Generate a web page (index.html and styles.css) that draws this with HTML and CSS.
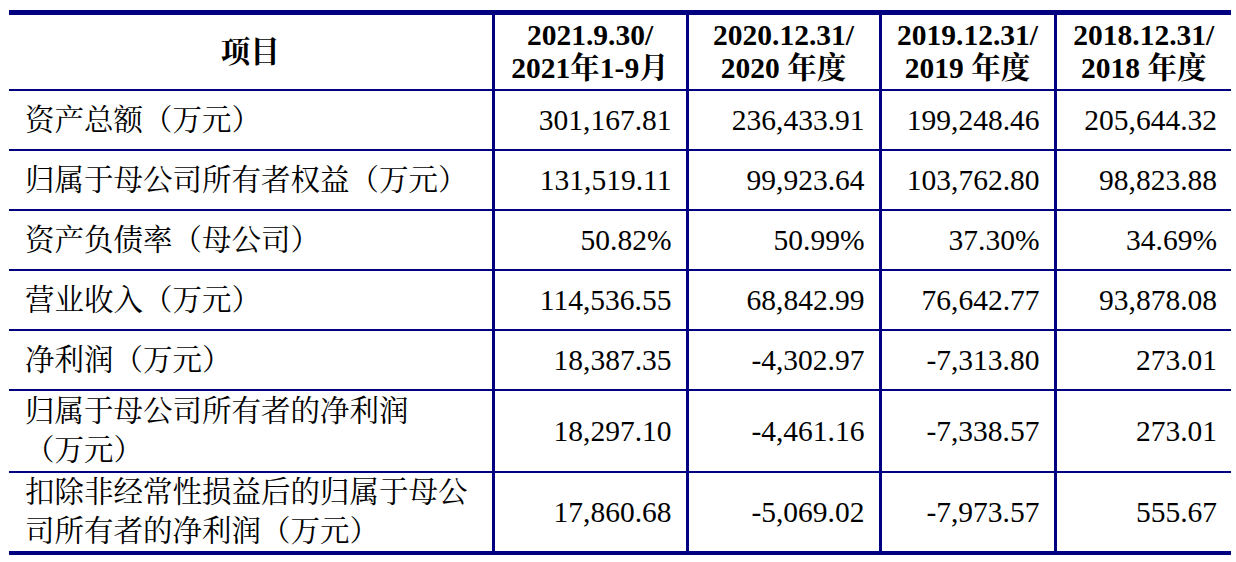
FILE: index.html
```html
<!DOCTYPE html>
<html lang="zh-CN">
<head>
<meta charset="utf-8">
<link rel="stylesheet" href="styles.css">
</head>
<body>
<table class="fin">
  <colgroup>
    <col class="c-item"><col class="c-a"><col class="c-b"><col class="c-c"><col class="c-d">
  </colgroup>
  <thead>
    <tr>
      <th>项目</th>
      <th>2021.9.30/<br>2021年1-9月</th>
      <th>2020.12.31/<br>2020 年度</th>
      <th>2019.12.31/<br>2019 年度</th>
      <th>2018.12.31/<br>2018 年度</th>
    </tr>
  </thead>
  <tbody>
    <tr class="single">
      <td class="label">资产总额（万元）</td>
      <td>301,167.81</td><td>236,433.91</td><td>199,248.46</td><td>205,644.32</td>
    </tr>
    <tr class="single">
      <td class="label">归属于母公司所有者权益（万元）</td>
      <td>131,519.11</td><td>99,923.64</td><td>103,762.80</td><td>98,823.88</td>
    </tr>
    <tr class="single">
      <td class="label">资产负债率（母公司）</td>
      <td>50.82%</td><td>50.99%</td><td>37.30%</td><td>34.69%</td>
    </tr>
    <tr class="single">
      <td class="label">营业收入（万元）</td>
      <td>114,536.55</td><td>68,842.99</td><td>76,642.77</td><td>93,878.08</td>
    </tr>
    <tr class="single">
      <td class="label">净利润（万元）</td>
      <td>18,387.35</td><td>-4,302.97</td><td>-7,313.80</td><td>273.01</td>
    </tr>
    <tr class="double">
      <td class="label">归属于母公司所有者的净利润<span class="keep">（万元）</span></td>
      <td>18,297.10</td><td>-4,461.16</td><td>-7,338.57</td><td>273.01</td>
    </tr>
    <tr class="double last">
      <td class="label">扣除非经常性损益后的归属于母公司所有者的净利润（万元）</td>
      <td>17,860.68</td><td>-5,069.02</td><td>-7,973.57</td><td>555.67</td>
    </tr>
  </tbody>
</table>
</body>
</html>
```
FILE: styles.css
```css
html, body {
  margin: 0;
  background: #ffffff;
}
body {
  padding: 10px 5px 0 9px;
  font-family: "Liberation Serif", "Noto Serif CJK SC", "Noto Sans CJK SC", serif;
  color: #000000;
}
.fin {
  width: 1222px;
  table-layout: fixed;
  border-collapse: collapse;
  font-size: 29.5px;
}
.c-item { width: 484px; }
.c-a { width: 194px; }
.c-b { width: 193px; }
.c-c { width: 175px; }
.c-d { width: 176px; }

.fin th, .fin td {
  border-top: 2px solid #000080;
  border-bottom: 2px solid #000080;
  border-left: 3px solid #000080;
  border-right: 3px solid #000080;
  vertical-align: middle;
}
.fin tr > :first-child { border-left: none; }
.fin tr > :last-child { border-right: none; }

.fin thead th {
  border-top: 5px solid #000080;
  font-weight: bold;
  text-align: center;
  line-height: 33px;
  padding: 4px 4px;
  white-space: nowrap;
}
.fin td {
  text-align: right;
  padding: 9px 14px 9px 16px;
  line-height: 40px;
}
.fin td.label {
  text-align: left;
}
.fin tr.double td {
  line-height: 39px;
  padding: 1px 14px 1px 16px;
}
.fin tr.double.last td {
  padding: 0 14px 0 16px;
}
.fin tr.last td {
  border-bottom: 4px solid #000080;
}
.keep {
  white-space: nowrap;
}
```
